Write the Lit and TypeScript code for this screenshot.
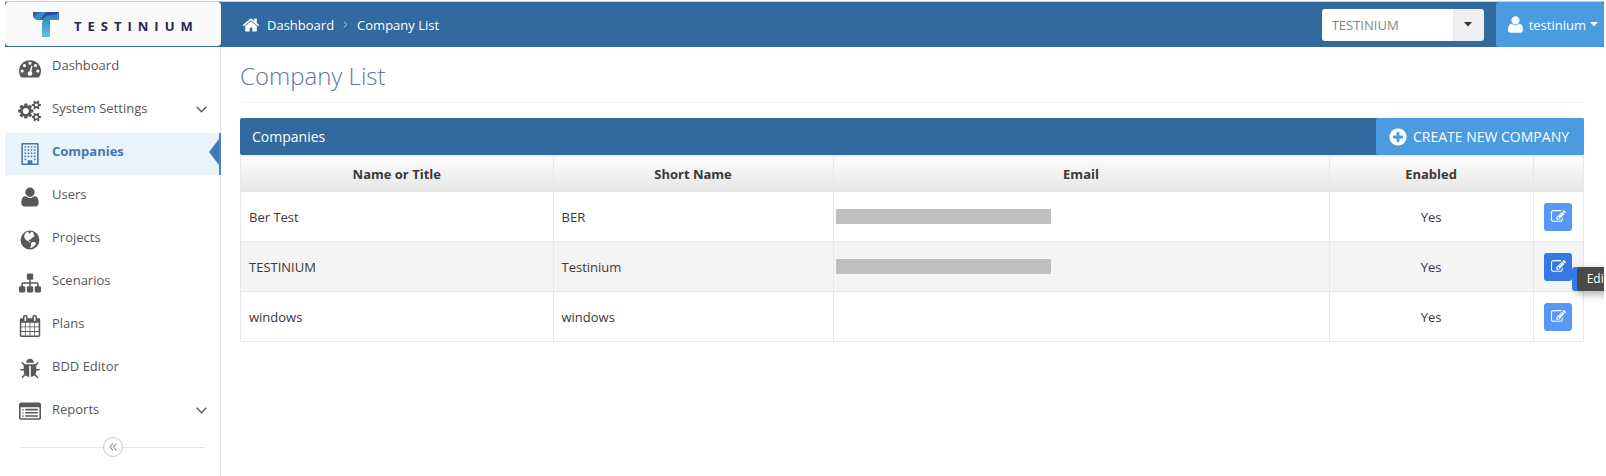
import { LitElement, html, css, svg } from "lit";
import { customElement, property, state } from "lit/decorators.js";
import { classMap } from "lit/directives/class-map.js";

const PATHS: Record<string, string> = {
  home: "M1472 992v480q0 26-19 45t-45 19h-384v-384h-256v384h-384q-26 0-45-19t-19-45v-480q0-1 .5-3t.5-3l575-474 575 474q1 2 1 6zm223-69l-62 74q-8 9-21 11h-3q-13 0-21-7l-692-577-692 577q-12 8-24 7-13-2-21-11l-62-74q-8-10-7-23.5t11-21.5l719-599q32-26 76-26t76 26l244 204v-195q0-14 9-23t23-9h192q14 0 23 9t9 23v408l219 182q10 8 11 21.5t-7 23.5z",
  tachometer: "M384 1152q0-53-37.5-90.5t-90.5-37.5-90.5 37.5-37.5 90.5 37.5 90.5 90.5 37.5 90.5-37.5 37.5-90.5zm192-448q0-53-37.5-90.5t-90.5-37.5-90.5 37.5-37.5 90.5 37.5 90.5 90.5 37.5 90.5-37.5 37.5-90.5zm428 481l101-382q6-26-7.5-48.5t-38.5-29.5-48 6.5-30 39.5l-101 382q-60 5-107 43.5t-63 98.5q-20 77 20 146t117 89 146-20 89-117q16-60-6-117t-72-91zm660-33q0-53-37.5-90.5t-90.5-37.5-90.5 37.5-37.5 90.5 37.5 90.5 90.5 37.5 90.5-37.5 37.5-90.5zm-640-640q0-53-37.5-90.5t-90.5-37.5-90.5 37.5-37.5 90.5 37.5 90.5 90.5 37.5 90.5-37.5 37.5-90.5zm448 192q0-53-37.5-90.5t-90.5-37.5-90.5 37.5-37.5 90.5 37.5 90.5 90.5 37.5 90.5-37.5 37.5-90.5zm320 448q0 261-141 483-19 29-54 29h-1402q-35 0-54-29-141-221-141-483 0-182 71-348t191-286 286-191 348-71 348 71 286 191 191 286 71 348z",
  cogs: "M832 896q0-106-75-181t-181-75-181 75-75 181 75 181 181 75 181-75 75-181zm768 512q0-52-38-90t-90-38-90 38-38 90q0 53 37.5 90.5t90.5 37.5 90.5-37.5 37.5-90.5zm0-1024q0-52-38-90t-90-38-90 38-38 90q0 53 37.5 90.5t90.5 37.5 90.5-37.5 37.5-90.5zm-384 421v185q0 10-7 19.5t-16 10.5l-155 24q-11 35-32 76 34 48 90 115 7 11 7 20 0 12-7 19-23 30-82.5 89.5t-78.5 59.5q-11 0-21-7l-115-90q-37 19-77 31-11 108-23 155-7 24-30 24h-186q-11 0-20-7.5t-10-17.5l-23-153q-34-10-75-31l-118 89q-7 7-20 7-11 0-21-8-144-133-144-160 0-9 7-19 10-14 41-53t47-61q-23-44-35-82l-152-24q-10-1-17-9.5t-7-19.5v-185q0-10 7-19.5t16-10.5l155-24q11-35 32-76-34-48-90-115-7-11-7-20 0-12 7-20 22-30 82-89t79-59q11 0 21 7l115 90q34-18 77-32 11-108 23-154 7-24 30-24h186q11 0 20 7.5t10 17.5l23 153q34 10 75 31l118-89q8-7 20-7 11 0 21 8 144 133 144 160 0 8-7 19-12 16-42 54t-45 60q23 48 34 82l152 23q10 2 17 10.5t7 19.5zm640 533v140q0 16-149 31-12 27-30 52 51 113 51 138 0 4-4 7-122 71-124 71-8 0-46-47t-52-68q-20 2-30 2t-30-2q-14 21-52 68t-46 47q-2 0-124-71-4-3-4-7 0-25 51-138-18-25-30-52-149-15-149-31v-140q0-16 149-31 13-29 30-52-51-113-51-138 0-4 4-7 4-2 35-20t59-34 30-16q8 0 46 46.5t52 67.5q20-2 30-2t30 2q51-71 92-112l6-2q4 0 124 70 4 3 4 7 0 25-51 138 17 23 30 52 149 15 149 31zm0-1024v140q0 16-149 31-12 27-30 52 51 113 51 138 0 4-4 7-122 71-124 71-8 0-46-47t-52-68q-20 2-30 2t-30-2q-14 21-52 68t-46 47q-2 0-124-71-4-3-4-7 0-25 51-138-18-25-30-52-149-15-149-31v-140q0-16 149-31 13-29 30-52-51-113-51-138 0-4 4-7 4-2 35-20t59-34 30-16q8 0 46 46.5t52 67.5q20-2 30-2t30 2q51-71 92-112l6-2q4 0 124 70 4 3 4 7 0 25-51 138 17 23 30 52 149 15 149 31z",
  building: "M256 0H1536q64 0 64 64V1728q0 64-64 64H256q-64 0-64-64V64q0-64 64-64zM320 128V1664H704V1440q0-32 32-32H1056q32 0 32 32V1664H1472V128zM448 256h128v128H448zM704 256h128v128H704zM960 256h128v128H960zM1216 256h128v128H1216zM448 512h128v128H448zM704 512h128v128H704zM960 512h128v128H960zM1216 512h128v128H1216zM448 768h128v128H448zM704 768h128v128H704zM960 768h128v128H960zM1216 768h128v128H1216zM448 1024h128v128H448zM704 1024h128v128H704zM960 1024h128v128H960zM1216 1024h128v128H1216zM448 1280h128v128H448zM1216 1280h128v128H1216z",
  user: "M1600 1405q0 120-73 189.500t-194 69.500h-874q-121 0-194-69.500t-73-189.500q0-53 3.500-103.500t14-109 26.500-108.500 43-97.500 62-81 85.500-53.500 111.500-20q9 0 42 21.500t74.500 48 108 48 133.500 21.500 133.500-21.500 108-48 74.500-48 42-21.500q61 0 111.500 20t85.500 53.500 62 81 43 97.500 26.500 108.500 14 109 3.500 103.500zm-320-893q0 159-112.500 271.500t-271.500 112.500-271.500-112.500-112.500-271.500 112.500-271.500 271.500-112.500 271.500 112.500 112.500 271.500z",
  globe: "M896 128a768 768 0 1 0 0 1536a768 768 0 1 0 0-1536zM520 350L660 250L800 230L760 330L860 380L960 300L940 220L1100 240L1220 330L1150 440L1260 500L1280 620L1160 640L1060 760L960 800L900 900L800 860L780 960L880 1000L960 1090L860 1080L700 960L560 900L440 720L420 520zM1080 1060L1240 1050L1400 1150L1350 1260L1200 1420L1030 1520L900 1550L960 1420L1000 1300L960 1180z",
  sitemap: "M1792 1248v320q0 40-28 68t-68 28h-320q-40 0-68-28t-28-68v-320q0-40 28-68t68-28h96v-192h-512v192h96q40 0 68 28t28 68v320q0 40-28 68t-68 28h-320q-40 0-68-28t-28-68v-320q0-40 28-68t68-28h96v-192h-512v192h96q40 0 68 28t28 68v320q0 40-28 68t-68 28h-320q-40 0-68-28t-28-68v-320q0-40 28-68t68-28h96v-192q0-52 38-90t90-38h512v-192h-96q-40 0-68-28t-28-68v-320q0-40 28-68t68-28h320q40 0 68 28t28 68v320q0 40-28 68t-68 28h-96v192h512q52 0 90 38t38 90v192h96q40 0 68 28t28 68z",
  calendar: "M192 1664h288v-288h-288v288zm352 0h320v-288h-320v288zm-352-352h288v-320h-288v320zm352 0h320v-320h-320v320zm-352-384h288v-288h-288v288zm736 736h320v-288h-320v288zm-384-736h320v-288h-320v288zm768 736h288v-288h-288v288zm-384-352h320v-320h-320v320zm-352-864v-288q0-13-9.5-22.5t-22.5-9.5h-64q-13 0-22.5 9.5t-9.5 22.5v288q0 13 9.5 22.5t22.5 9.5h64q13 0 22.5-9.5t9.5-22.5zm736 864h288v-320h-288v320zm-384-384h320v-288h-320v288zm384 0h288v-288h-288v288zm32-480v-288q0-13-9.5-22.5t-22.5-9.5h-64q-13 0-22.5 9.5t-9.5 22.5v288q0 13 9.5 22.5t22.5 9.5h64q13 0 22.5-9.5t9.5-22.5zm384-64v1280q0 52-38 90t-90 38h-1408q-52 0-90-38t-38-90v-1280q0-52 38-90t90-38h128v-96q0-66 47-113t113-47h64q66 0 113 47t47 113v96h384v-96q0-66 47-113t113-47h64q66 0 113 47t47 113v96h128q52 0 90 38t38 90z",
  bug: "M1696 960q0 26-19 45t-45 19h-224q0 171-67 290l208 209q19 19 19 45t-19 45q-18 19-45 19t-45-19l-198-197q-5 5-15 13t-42 28.5-65 36.5-82 29-97 13v-896h-128v896q-51 0-101.5-13.5t-87-33-66-39-43.5-32.5l-15-14-183 207q-20 21-48 21-24 0-43-16-19-18-20.5-44.5t15.5-46.5l202-227q-58-114-58-274h-224q-26 0-45-19t-19-45 19-45 45-19h224v-294l-173-173q-19-19-19-45t19-45 45-19 45 19l173 173h844l173-173q19-19 45-19t45 19 19 45-19 45l-173 173v294h224q26 0 45 19t19 45zm-480-576h-640q0-133 93.5-226.5t226.5-93.5 226.5 93.5 93.5 226.5z",
  list: "M256 672h128v96H256zM256 928h128v96H256zM256 1184h128v96H256zM512 640h1024v128H512zM512 896h1024v128H512zM512 1152h1024v128H512zM1664 1376v-832q0-13-9.5-22.5t-22.5-9.5h-1472q-13 0-22.5 9.5t-9.5 22.5v832q0 13 9.5 22.5t22.5 9.5h1472q13 0 22.5-9.5t9.5-22.5zm128-1088v1088q0 66-47 113t-113 47h-1472q-66 0-113-47t-47-113v-1088q0-66 47-113t113-47h1472q66 0 113 47t47 113z",
  edit: "M888 1184l116-116-152-152-116 116v56h96v96h56zm440-720q-16-16-33 1l-350 350q-17 17-1 33t33-1l350-350q17-17 1-33zm80 594v190q0 119-84.5 203.5t-203.5 84.5h-832q-119 0-203.5-84.5t-84.5-203.5v-832q0-119 84.5-203.5t203.5-84.5h832q63 0 117 25 15 7 18 23 3 17-9 29l-49 49q-14 14-32 8-23-6-45-6h-832q-66 0-113 47t-47 113v832q0 66 47 113t113 47h832q66 0 113-47t47-113v-126q0-13 9-22l64-64q15-15 35-7t20 29zm-96-738l288 288-672 672h-288v-288zm444 132l-92 92-288-288 92-92q28-28 68-28t68 28l152 152q28 28 28 68t-28 68z",
  plus: "M1344 960v-128q0-26-19-45t-45-19h-256v-256q0-26-19-45t-45-19h-128q-26 0-45 19t-19 45v256h-256q-26 0-45 19t-19 45v128q0 26 19 45t45 19h256v256q0 26 19 45t45 19h128q26 0 45-19t19-45v-256h256q26 0 45-19t19-45zm320-64q0 209-103 385.5t-279.5 279.5-385.5 103-385.5-103-279.5-279.5-103-385.5 103-385.5 279.5-279.5 385.5-103 385.5 103 279.5 279.5 103 385.5z",
};

@customElement("ui-icon")
export class UiIcon extends LitElement {
  @property() name = "home";
  @property({ type: Number }) size = 20;

  static styles = css`
    :host { display: inline-flex; flex: none; }
    .glyph { display: block; fill: currentColor; overflow: visible; }
  `;

  render() {
    const width = this.name === "cogs" ? 1860 : 1792;
    return html`<svg class="glyph" width=${this.size} height=${this.size} viewBox="0 0 ${width} 1792" aria-hidden="true">
      ${svg`<path fill-rule="evenodd" d=${PATHS[this.name]}></path>`}
    </svg>`;
  }
}

interface NavItem { label: string; icon: string; expandable?: boolean }

const NAV: NavItem[] = [
  { label: "Dashboard", icon: "tachometer" },
  { label: "System Settings", icon: "cogs", expandable: true },
  { label: "Companies", icon: "building" },
  { label: "Users", icon: "user" },
  { label: "Projects", icon: "globe" },
  { label: "Scenarios", icon: "sitemap" },
  { label: "Plans", icon: "calendar" },
  { label: "BDD Editor", icon: "bug" },
  { label: "Reports", icon: "list", expandable: true },
];

@customElement("side-nav")
export class SideNav extends LitElement {
  @state() private current = "Companies";

  static styles = css`
    :host { display: block; box-sizing: border-box; border-right: 1px solid #e4e4e4; }
    .list { list-style: none; margin: 0; padding: 0; }
    .item { height: 43px; box-sizing: border-box; border-bottom: 1px solid #fcfcfc; }
    .link {
      position: relative; display: flex; align-items: center; gap: 11px; height: 100%;
      box-sizing: border-box; padding: 0 13px 0 14px; color: #585858; text-decoration: none;
    }
    .label { flex: 1; padding-bottom: 6px; line-height: 18px; }
    .active { background: #ebf3fb; color: #3e7ab8; font-weight: 700; margin-right: -1px; border-right: 2px solid #4a86c0; }
    .marker { position: absolute; right: 0; top: 6px; width: 10px; height: 26px; fill: #3e7ab8; }
    .chevron { fill: none; stroke: #585858; stroke-width: 1.3; margin-bottom: 4px; }
    .fold { display: flex; align-items: center; padding: 3px 15px 0; }
    .rule { flex: 1; height: 1px; background: #e6e6e6; }
    .toggle {
      display: grid; place-items: center; width: 20px; height: 20px; padding: 0;
      border: 1px solid #c8c8c8; border-radius: 50%; background: #fff;
    }
    .toggle-glyph { fill: none; stroke: #a0a0a0; stroke-width: 1.2; }
  `;

  render() {
    return html`
      <nav aria-label="Main">
        <ul class="list">
          ${NAV.map((item) => html`
            <li class="item">
              <a href="#" class=${classMap({ link: true, active: item.label === this.current })}
                @click=${() => (this.current = item.label)}>
                <ui-icon name=${item.icon} .size=${22}></ui-icon>
                <span class="label">${item.label}</span>
                ${item.expandable ? html`<svg class="chevron" width="11" height="7" viewBox="0 0 11 7"><path d="M.7.8 5.5 5.8 10.3.8"></path></svg>` : ""}
                ${item.label === this.current ? html`<svg class="marker" viewBox="0 0 10 26"><path d="M10 0V26L0 13z"></path></svg>` : ""}
              </a>
            </li>`)}
        </ul>
      </nav>
      <div class="fold">
        <span class="rule"></span>
        <button class="toggle" aria-label="Collapse menu">
          <svg class="toggle-glyph" width="8" height="8" viewBox="0 0 8 8"><path d="M4 .5 1 4 4 7.5M7.5.5 4.5 4 7.5 7.5"></path></svg>
        </button>
        <span class="rule"></span>
      </div>`;
  }
}

@customElement("top-bar")
export class TopBar extends LitElement {
  static styles = css`
    :host { display: flex; height: 45px; background: #32699f; }
    .brand {
      display: flex; align-items: center; gap: 15px; width: 216px; height: 44px; box-sizing: border-box;
      padding-left: 28px; background: #fafafa; border-radius: 4px; text-decoration: none;
      color: #2b2553; font-size: 13px; font-weight: 700; letter-spacing: 6px;
    }
    .wordmark { padding-top: 4px; }
    .crumbs { flex: 1; display: flex; align-items: center; gap: 9px; padding-left: 21px; color: #fff; }
    .crumb-link { display: flex; align-items: center; gap: 7px; color: #fff; text-decoration: none; }
    .sep { fill: none; stroke: #b9cde0; stroke-width: 1; }
    .company { display: grid; align-self: center; margin-right: 12px; }
    .picker {
      appearance: none; grid-area: 1 / 1; width: 162px; height: 32px; padding: 0 10px; border: 0; border-radius: 3px;
      background: linear-gradient(to right, #fff 131px, #eee 131px); color: #858585; font: inherit;
    }
    .arrow { grid-area: 1 / 1; place-self: center end; margin-right: 12px; fill: #333; pointer-events: none; }
    .account {
      display: flex; align-items: center; gap: 4px; border: 0; border-radius: 3px; padding: 0 6px 0 10px;
      background: #4a9bdf; color: #fff; font: inherit;
    }
    .caret { fill: #fff; }
  `;

  render() {
    return html`
      <a class="brand" href="#">
        <svg width="26" height="25" viewBox="0 0 26 25" aria-hidden="true">
          <defs>
            <linearGradient id="stem" x1="0" y1="0" x2="0" y2="1">
              <stop offset="0" stop-color="#2f79b5"></stop><stop offset=".5" stop-color="#3f9fc9"></stop><stop offset="1" stop-color="#5fc0dc"></stop>
            </linearGradient>
            <linearGradient id="bar" x1="0" y1="0" x2="1" y2=".3">
              <stop offset="0" stop-color="#2d459b"></stop><stop offset=".35" stop-color="#3d8fc6"></stop>
              <stop offset=".6" stop-color="#2f70b3"></stop><stop offset="1" stop-color="#2d62a8"></stop>
            </linearGradient>
          </defs>
          <path fill="url(#bar)" d="M0 0H26V8H4Q0 7 0 3z"></path>
          <path fill="url(#stem)" d="M9 25V12Q9 7 14 4Q20 3 26 0V8H17V25z"></path>
          <path fill="#2c4c9e" d="M14 0H26Q24 3 18 3Q12 3 9 8Q9 3 14 0z"></path>
        </svg>
        <span class="wordmark">TESTINIUM</span>
      </a>
      <nav class="crumbs" aria-label="Breadcrumb">
        <a class="crumb-link" href="#"><ui-icon name="home" .size=${18}></ui-icon>Dashboard</a>
        <svg class="sep" width="5" height="7" viewBox="0 0 5 7"><path d="M.7.5 4 3.5.7 6.5"></path></svg>
        <span>Company List</span>
      </nav>
      <div class="company">
        <select class="picker" aria-label="Company"><option>TESTINIUM</option></select>
        <svg class="arrow" width="8" height="5" viewBox="0 0 8 5"><path d="M0 0H8L4 4.5z"></path></svg>
      </div>
      <button class="account">
        <ui-icon name="user" .size=${19}></ui-icon>testinium
        <svg class="caret" width="8" height="5" viewBox="0 0 8 5"><path d="M0 0H8L4 4.5z"></path></svg>
      </button>`;
  }
}

interface Company { name: string; short: string; email: boolean; enabled: string; hovered?: boolean }

const COMPANIES: Company[] = [
  { name: "Ber Test", short: "BER", email: true, enabled: "Yes" },
  { name: "TESTINIUM", short: "Testinium", email: true, enabled: "Yes", hovered: true },
  { name: "windows", short: "windows", email: false, enabled: "Yes" },
];

@customElement("company-list")
export class CompanyList extends LitElement {
  static styles = css`
    :host { display: block; padding: 0 20px 0 19px; }
    .title {
      margin: 0; padding: 13px 0 10px; border-bottom: 1px dotted #e8e8e8;
      color: #5d79a6; font-size: 24px; font-weight: 300; line-height: 32px;
    }
    .bar {
      display: flex; justify-content: space-between; align-items: stretch; height: 37px; margin-top: 15px;
      background: #32699f; border-radius: 2px; color: #fff; font-size: 14px;
    }
    .heading { margin: 0; padding-left: 12px; font-size: 14px; font-weight: 400; line-height: 37px; }
    .create {
      display: flex; align-items: center; gap: 5px; padding: 0 15px 0 12px; border: 0; border-radius: 2px;
      background: #4a9bdf; color: #fff; font: inherit;
    }
    .grid { width: 100%; border-collapse: collapse; table-layout: fixed; color: #393939; }
    .head { height: 35px; padding: 0; border: 1px solid #e8e8e8; background: linear-gradient(#fdfdfd, #e6e6e6); font-weight: 700; }
    .cell { height: 50px; box-sizing: border-box; padding: 0 8px; border: 1px solid #e8e8e8; }
    .row:nth-child(even) { background: #f4f4f4; }
    .center { text-align: center; }
    .c-name { width: 23.27%; } .c-short { width: 20.85%; } .c-enabled { width: 15.2%; } .c-action { width: 3.75%; }
    .mask { width: 215px; height: 15px; margin-left: -6px; background: #bfbfbf; }
    .action { padding: 0; }
    .spot { position: relative; display: flex; justify-content: center; }
    .edit {
      display: grid; place-items: center; width: 28px; height: 28px; padding: 0; border: 0; border-radius: 3px;
      background: #5897f5; color: #fff;
    }
    .hovered { background: #3479e4; }
    .tip {
      position: absolute; left: 43px; top: 14px; height: 24px; box-sizing: border-box; padding: 0 10px;
      border-radius: 3px; background: #4a4a4a; color: #fff; line-height: 24px; font-size: 12px;
      box-shadow: -5px 0 0 #3479e4, 0 3px 8px #0005;
    }
  `;

  render() {
    return html`
      <h1 class="title">Company List</h1>
      <div class="bar">
        <h2 class="heading">Companies</h2>
        <button class="create"><ui-icon name="plus" .size=${20}></ui-icon>CREATE NEW COMPANY</button>
      </div>
      <table class="grid">
        <colgroup><col class="c-name"><col class="c-short"><col><col class="c-enabled"><col class="c-action"></colgroup>
        <thead>
          <tr>
            <th class="head">Name or Title</th><th class="head">Short Name</th><th class="head">Email</th>
            <th class="head">Enabled</th><th class="head"></th>
          </tr>
        </thead>
        <tbody>
          ${COMPANIES.map((c) => html`
            <tr class="row">
              <td class="cell">${c.name}</td>
              <td class="cell">${c.short}</td>
              <td class="cell">${c.email ? html`<div class="mask"></div>` : ""}</td>
              <td class="cell center">${c.enabled}</td>
              <td class="cell action">
                <div class="spot">
                  <button class=${classMap({ edit: true, hovered: !!c.hovered })} aria-label="Edit"><ui-icon name="edit" .size=${15}></ui-icon></button>
                  ${c.hovered ? html`<span class="tip">Edit</span>` : ""}
                </div>
              </td>
            </tr>`)}
        </tbody>
      </table>`;
  }
}

@customElement("app-root")
export class AppRoot extends LitElement {
  static styles = css`
    :host {
      display: flex; flex-direction: column; box-sizing: border-box; min-height: 100vh; padding-top: 1px; overflow: hidden;
      margin: 0 2px 0 5px; background: #fff; color: #393939; font-family: "Open Sans", "Noto Sans", sans-serif; font-size: 13px;
    }
    .edge { height: 1px; background: #c8ccc8; }
    .body { flex: 1; display: flex; }
    .side { width: 216px; flex: none; }
    .main { flex: 1; min-width: 0; }
  `;

  render() {
    return html`
      <div class="edge"></div>
      <top-bar></top-bar>
      <div class="body">
        <side-nav class="side"></side-nav>
        <company-list class="main"></company-list>
      </div>`;
  }
}
